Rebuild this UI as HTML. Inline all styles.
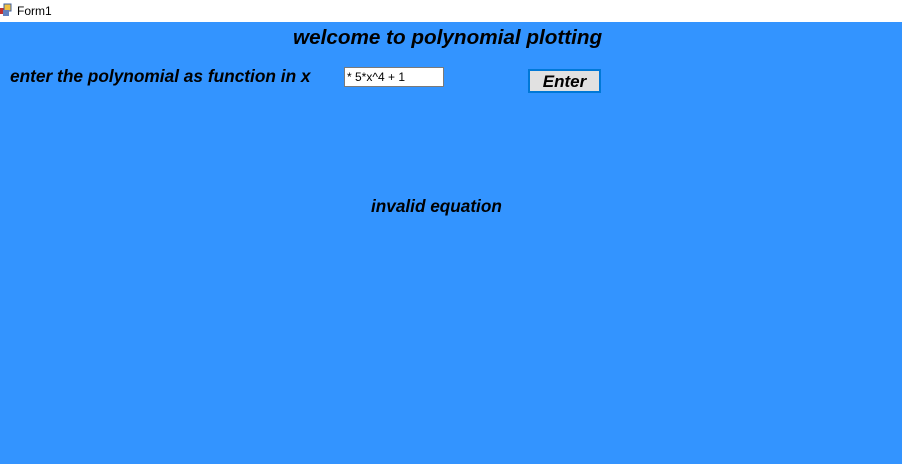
<!DOCTYPE html>
<html><head><style>
body{margin:0;width:902px;height:464px;background:#3394ff;position:relative;overflow:hidden;font-family:"Liberation Sans",sans-serif}
.tb{position:absolute;left:0;top:0;width:902px;height:22px;background:#fff}
.t{position:absolute;font-weight:bold;font-style:italic;color:#000;white-space:nowrap}
</style></head><body>
<div class="tb">
<svg style="position:absolute;left:0;top:3px" width="12" height="14"><rect x="0" y="5" width="6" height="6" fill="#c03030"/><rect x="4" y="1" width="7" height="7" fill="#f0c040" stroke="#4060a0"/><rect x="3" y="7" width="6" height="6" fill="#6080c0"/></svg>
<span style="position:absolute;left:17px;top:4px;font-size:12px">Form1</span>
</div>
<div class="t" style="left:293px;top:26px;font-size:20.7px">welcome to polynomial plotting</div>
<div class="t" style="left:10px;top:66px;font-size:17.3px">enter the polynomial as function in x</div>
<div style="position:absolute;left:344px;top:67px;background:#fff;border:1px solid #7a7a7a;font-size:12px;line-height:18px;padding-left:2px;box-sizing:border-box;width:100px;height:20px">* 5*x^4 + 1</div>
<div style="position:absolute;left:528px;top:69px;width:73px;height:24px;box-sizing:border-box;background:#e1e1e1;border:2px solid #0078d7;text-align:center;font-weight:bold;font-style:italic;font-size:17px;line-height:22px">Enter</div>
<div class="t" style="left:371px;top:196px;font-size:17.2px">invalid equation</div>
</body></html>
